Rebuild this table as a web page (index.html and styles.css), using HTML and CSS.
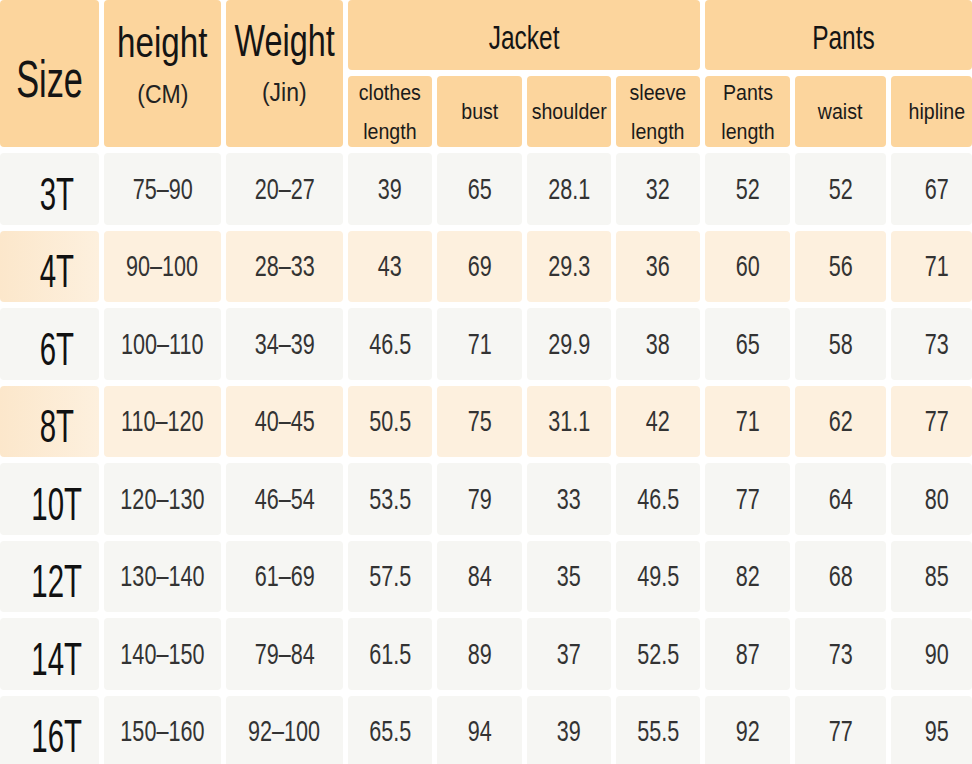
FILE: index.html
```html
<!DOCTYPE html>
<html lang="en">
<head>
<meta charset="utf-8">
<title>Size chart</title>
<link rel="stylesheet" href="styles.css">
</head>
<body>
<div class="chart">
  <div class="hd main size-h"><span class="t">Size</span></div>
  <div class="hd main two hgt"><span class="t big1">height</span><span class="t small1">(CM)</span></div>
  <div class="hd main two wgt"><span class="t big2">Weight</span><span class="t small2">(Jin)</span></div>
  <div class="hd group jacket"><span class="t">Jacket</span></div>
  <div class="hd group pants"><span class="t">Pants</span></div>

  <div class="hd sub ml"><span class="t">clothes<br>length</span></div>
  <div class="hd sub"><span class="t">bust</span></div>
  <div class="hd sub"><span class="t">shoulder</span></div>
  <div class="hd sub ml"><span class="t">sleeve<br>length</span></div>
  <div class="hd sub ml"><span class="t">Pants<br>length</span></div>
  <div class="hd sub"><span class="t">waist</span></div>
  <div class="hd sub r"><span class="t">hipline</span></div>

  <div class="c sz"><span class="t">3T</span></div><div class="c"><span class="t">75–90</span></div><div class="c"><span class="t">20–27</span></div><div class="c"><span class="t">39</span></div><div class="c"><span class="t">65</span></div><div class="c"><span class="t">28.1</span></div><div class="c"><span class="t">32</span></div><div class="c"><span class="t">52</span></div><div class="c"><span class="t">52</span></div><div class="c r"><span class="t">67</span></div>

  <div class="c sz o"><span class="t">4T</span></div><div class="c o"><span class="t">90–100</span></div><div class="c o"><span class="t">28–33</span></div><div class="c o"><span class="t">43</span></div><div class="c o"><span class="t">69</span></div><div class="c o"><span class="t">29.3</span></div><div class="c o"><span class="t">36</span></div><div class="c o"><span class="t">60</span></div><div class="c o"><span class="t">56</span></div><div class="c o r"><span class="t">71</span></div>

  <div class="c sz"><span class="t">6T</span></div><div class="c"><span class="t">100–110</span></div><div class="c"><span class="t">34–39</span></div><div class="c"><span class="t">46.5</span></div><div class="c"><span class="t">71</span></div><div class="c"><span class="t">29.9</span></div><div class="c"><span class="t">38</span></div><div class="c"><span class="t">65</span></div><div class="c"><span class="t">58</span></div><div class="c r"><span class="t">73</span></div>

  <div class="c sz o"><span class="t">8T</span></div><div class="c o"><span class="t">110–120</span></div><div class="c o"><span class="t">40–45</span></div><div class="c o"><span class="t">50.5</span></div><div class="c o"><span class="t">75</span></div><div class="c o"><span class="t">31.1</span></div><div class="c o"><span class="t">42</span></div><div class="c o"><span class="t">71</span></div><div class="c o"><span class="t">62</span></div><div class="c o r"><span class="t">77</span></div>

  <div class="c sz"><span class="t">10T</span></div><div class="c"><span class="t">120–130</span></div><div class="c"><span class="t">46–54</span></div><div class="c"><span class="t">53.5</span></div><div class="c"><span class="t">79</span></div><div class="c"><span class="t">33</span></div><div class="c"><span class="t">46.5</span></div><div class="c"><span class="t">77</span></div><div class="c"><span class="t">64</span></div><div class="c r"><span class="t">80</span></div>

  <div class="c sz"><span class="t">12T</span></div><div class="c"><span class="t">130–140</span></div><div class="c"><span class="t">61–69</span></div><div class="c"><span class="t">57.5</span></div><div class="c"><span class="t">84</span></div><div class="c"><span class="t">35</span></div><div class="c"><span class="t">49.5</span></div><div class="c"><span class="t">82</span></div><div class="c"><span class="t">68</span></div><div class="c r"><span class="t">85</span></div>

  <div class="c sz"><span class="t">14T</span></div><div class="c"><span class="t">140–150</span></div><div class="c"><span class="t">79–84</span></div><div class="c"><span class="t">61.5</span></div><div class="c"><span class="t">89</span></div><div class="c"><span class="t">37</span></div><div class="c"><span class="t">52.5</span></div><div class="c"><span class="t">87</span></div><div class="c"><span class="t">73</span></div><div class="c r"><span class="t">90</span></div>

  <div class="c sz"><span class="t">16T</span></div><div class="c"><span class="t">150–160</span></div><div class="c"><span class="t">92–100</span></div><div class="c"><span class="t">65.5</span></div><div class="c"><span class="t">94</span></div><div class="c"><span class="t">39</span></div><div class="c"><span class="t">55.5</span></div><div class="c"><span class="t">92</span></div><div class="c"><span class="t">77</span></div><div class="c r"><span class="t">95</span></div>
</div>
</body>
</html>
```

FILE: styles.css
```css
html, body {
  margin: 0;
  padding: 0;
  background: #ffffff;
  overflow: hidden;
  width: 972px;
  height: 764px;
}

body {
  font-family: "Liberation Sans", Arial, sans-serif;
}

.chart {
  display: grid;
  grid-template-columns: 99px 117px 117px 84px 85px 84px 84px 85px 91px 81px;
  grid-template-rows: 70px 71px repeat(7, 71.5px) 68.5px;
  column-gap: 5px;
  row-gap: 6px;
  width: 972px;
}

.t {
  display: inline-block;
  white-space: nowrap;
}

.hd {
  background: #fcd59d;
  border-radius: 4px;
  display: flex;
  align-items: center;
  justify-content: center;
  color: #141414;
  text-align: center;
  box-sizing: border-box;
}

.main {
  grid-row: 1 / 3;
}

.size-h {
  padding-top: 11px;
}

.size-h .t {
  font-size: 52px;
  transform: scaleX(0.66);
}

.two {
  flex-direction: column;
}

.hgt {
  padding-bottom: 9px;
}

.wgt {
  padding-bottom: 13px;
}

.big1 {
  font-size: 42px;
  line-height: 50px;
  transform: scaleX(0.79);
}

.big2 {
  font-size: 45px;
  line-height: 50px;
  transform: scaleX(0.72);
}

.small1,
.small2 {
  font-size: 25px;
  line-height: 52px;
  transform: scaleX(0.92);
  color: #222;
}

.group {
  padding-top: 4px;
}

.group .t {
  font-size: 34px;
  transform: scaleX(0.72);
}

.jacket {
  grid-column: 4 / 8;
}

.pants {
  grid-column: 8 / 11;
  padding-left: 10px;
}

.sub .t {
  font-size: 22px;
  line-height: 39px;
  transform: scaleX(0.89);
  color: #1a1a1a;
}

.c {
  background: #f6f6f3;
  border-radius: 4px;
  display: flex;
  align-items: center;
  justify-content: center;
  color: #333333;
  box-sizing: border-box;
}

.c .t {
  font-size: 30px;
  transform: scaleX(0.72);
}

.c.o {
  background: #fdf0de;
}

.r {
  padding-left: 10px;
}

.c.sz {
  padding-left: 15px;
  padding-top: 10px;
  color: #111111;
}

.c.sz.o {
  background: linear-gradient(to right, #fce7cb, #fdf0de);
}

.c.sz .t {
  font-size: 46px;
  transform: scaleX(0.64);
}

.chart > .c:nth-last-child(-n+10) {
  border-bottom-left-radius: 0;
  border-bottom-right-radius: 0;
  padding-top: 3px;
}

.chart > .c.sz:nth-last-child(-n+10) {
  padding-top: 13px;
}
```
